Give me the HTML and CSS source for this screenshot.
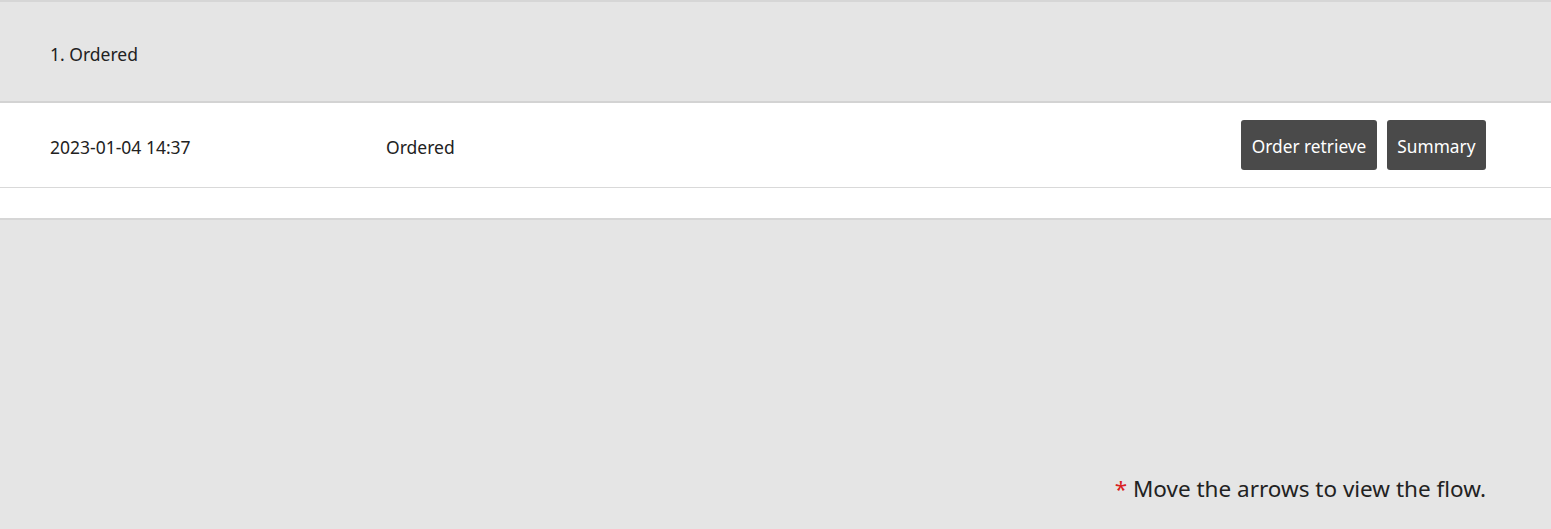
FILE: index.html
```html
<!DOCTYPE html>
<html lang="en">
<head>
<meta charset="utf-8">
<title>Order flow</title>
<link rel="stylesheet" href="styles.css">
</head>
<body>
<div class="panel">
  <div class="step-head">1. Ordered</div>
  <div class="step-body">
    <div class="row">
      <div class="cell date">2023-01-04 14:37</div>
      <div class="cell status">Ordered</div>
      <div class="actions">
        <button class="btn">Order retrieve</button>
        <button class="btn">Summary</button>
      </div>
    </div>
    <div class="spacer"></div>
  </div>
</div>
<div class="note"><span class="star">*</span> Move the arrows to view the flow.</div>
</body>
</html>
```
FILE: styles.css
```css
html, body {
  margin: 0;
  padding: 0;
}
body {
  background: #e5e5e5;
  font-family: "Noto Sans", "Open Sans", sans-serif;
  color: #222;
  height: 529px;
  overflow: hidden;
}
.panel {
  border-top: 2px solid #d6d6d6;
}
.step-head {
  height: 101px;
  box-sizing: border-box;
  padding: 4px 0 0 50px;
  display: flex;
  align-items: center;
  font-size: 17.5px;
  border-bottom: 2px solid #d3d3d3;
}
.step-body {
  background: #fff;
  border-bottom: 2px solid #d6d6d6;
}
.row {
  height: 85px;
  box-sizing: border-box;
  display: flex;
  align-items: center;
  padding: 0 65px 0 50px;
  border-bottom: 1px solid #d9d9d9;
  font-size: 17.5px;
}
.cell {
  padding-top: 3px;
}
.date {
  width: 336px;
}
.status {
  flex: 1;
}
.actions {
  display: flex;
  gap: 10px;
}
.btn {
  font-family: inherit;
  font-size: 17.3px;
  color: #fff;
  background: #4a4a4a;
  border: none;
  border-radius: 3px;
  height: 50px;
  padding: 2px 10.5px 0;
  cursor: pointer;
}
.spacer {
  height: 30px;
}
.note {
  text-align: right;
  padding-right: 65px;
  margin-top: 253px;
  font-size: 22.5px;
  color: #222;
}
.star {
  color: #d92020;
}
```
